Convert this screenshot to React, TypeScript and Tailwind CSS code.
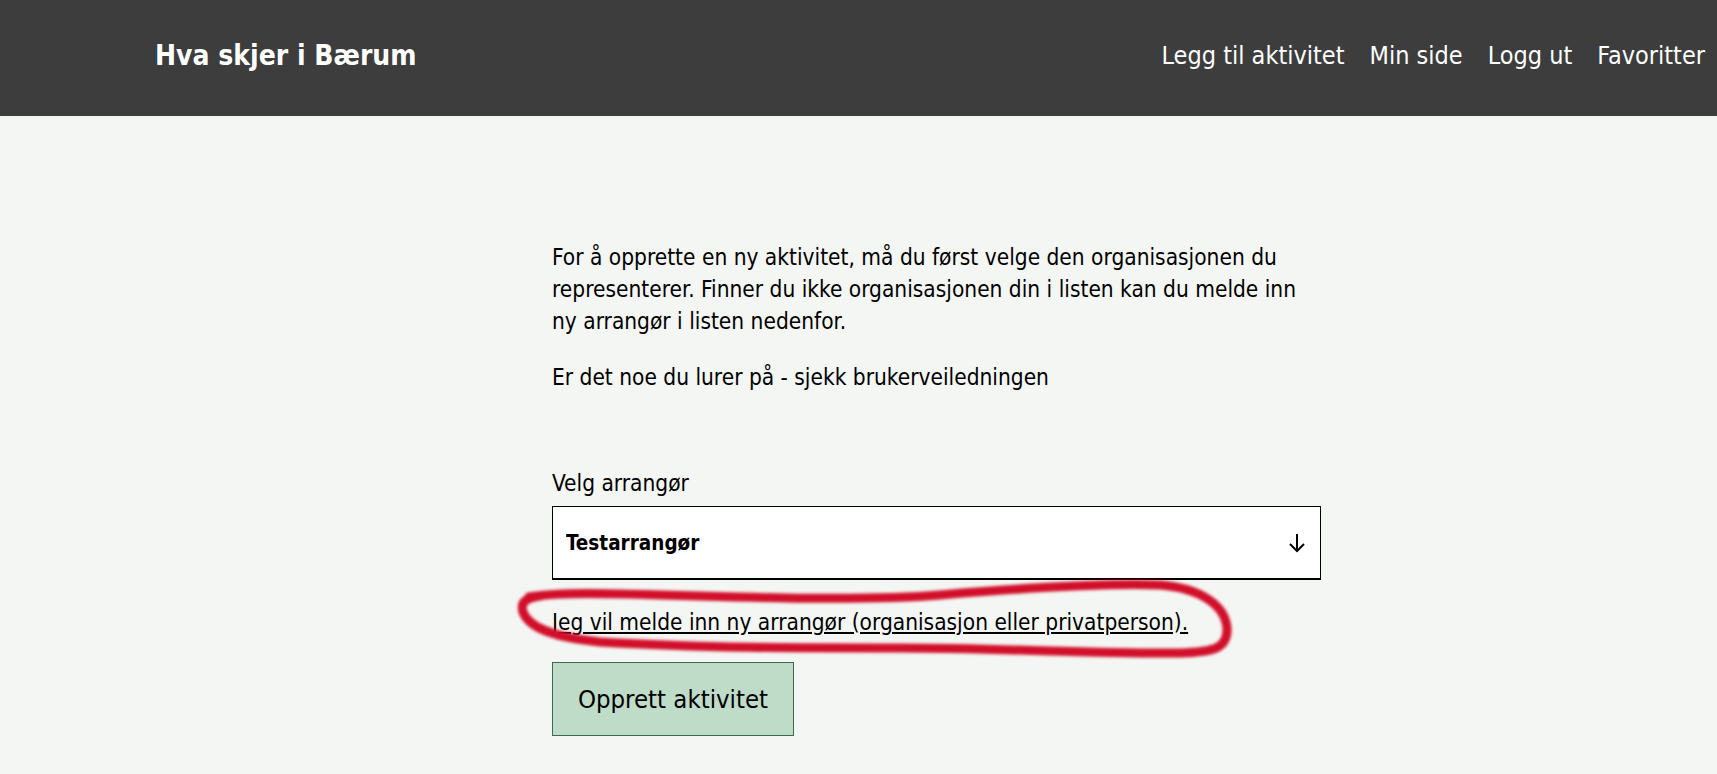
import { useState } from 'react';

const font = { fontFamily: '"DejaVu Sans Condensed", "DejaVu Sans", sans-serif' };

export default function App() {
  const [org, setOrg] = useState('Testarrangør');

  return (
    <div className="min-h-screen bg-[#f4f6f3] text-black" style={font}>
      <header className="h-[116px] bg-[#3c3d3c] flex items-center justify-between pl-[155px] pr-[12px] pb-[5px]">
        <a href="#" className="text-white text-[28px] font-bold">Hva skjer i Bærum</a>
        <nav className="flex items-center gap-[25px] text-white text-[25px]">
          <a href="#">Legg til aktivitet</a>
          <a href="#">Min side</a>
          <a href="#">Logg ut</a>
          <a href="#">Favoritter</a>
        </nav>
      </header>

      <main className="ml-[552px] w-[769px] pt-[125px] text-[22.5px] leading-[32px]">
        <p>
          For å opprette en ny aktivitet, må du først velge den organisasjonen du
          representerer. Finner du ikke organisasjonen din i listen kan du melde inn
          ny arrangør i listen nedenfor.
        </p>
        <p className="mt-[24px]">Er det noe du lurer på - sjekk brukerveiledningen</p>

        <label className="block mt-[74px]">Velg arrangør</label>
        <div className="relative mt-[7px]">
          <select
            value={org}
            onChange={(e) => setOrg(e.target.value)}
            className="appearance-none w-full h-[74px] bg-white border border-black border-b-2 pl-[13px] font-bold text-[20.5px] outline-none"
          >
            <option>Testarrangør</option>
          </select>
          <svg className="absolute right-[15px] top-[27px] pointer-events-none" width="18" height="20" viewBox="0 0 18 20" fill="none" stroke="black" strokeWidth="2">
            <path d="M9 1v17M2 11l7 7 7-7" />
          </svg>
        </div>

        <div className="relative mt-[26px]">
          <a href="#" className="underline">Jeg vil melde inn ny arrangør (organisasjon eller privatperson).</a>
          {/* red hand-drawn marker circle from the screenshot */}
          <svg className="absolute left-[-40px] top-[-30px] pointer-events-none blur-[1.5px]" width="720" height="90" viewBox="512 576 720 90" fill="none">
            <path
              d="M529 597 C 560 592, 600 593, 700 596 S 880 600, 940 595 S 1100 583, 1160 585 C 1200 588, 1225 605, 1227 628 C 1228 648, 1215 652, 1180 653 C 1100 654, 1000 648, 900 648 C 800 648, 700 648, 600 642 C 560 638, 530 630, 523 612 C 520 602, 526 598, 540 596"
              stroke="#d10f2a"
              strokeWidth="9"
              strokeLinecap="round"
            />
          </svg>
        </div>

        <button className="mt-[24px] w-[242px] h-[74px] bg-[#bedcc8] border border-[#3a6b50] text-[25.5px]">
          Opprett aktivitet
        </button>
      </main>
    </div>
  );
}
